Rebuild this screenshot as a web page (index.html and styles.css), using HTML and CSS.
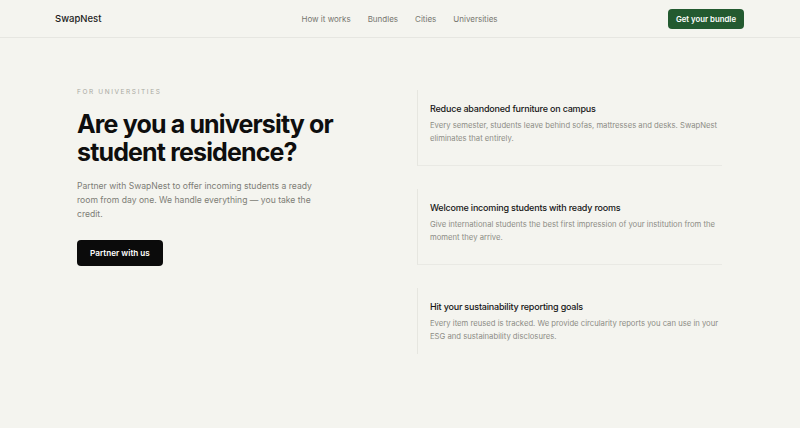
FILE: index.html
```html
<!doctype html>
<html lang="en">

<head>
  <meta charset="UTF-8" />
  <meta name="viewport" content="width=device-width, initial-scale=1.0" />
  <title>SwapNest for Universities</title>
  <link rel="stylesheet" href="styles.css">
</head>

<body>
  <header class="nav">
    <a class="logo" href="#">SwapNest</a>
    <nav class="nav-links">
      <a href="#">How it works</a>
      <a href="#">Bundles</a>
      <a href="#">Cities</a>
      <a href="#">Universities</a>
    </nav>
    <div class="nav-cta">
      <a class="btn btn-green" href="#">Get your bundle</a>
    </div>
  </header>

  <main class="hero">
    <div class="hero-copy">
      <p class="eyebrow">For universities</p>
      <h1>Are you a university or student residence?</h1>
      <p class="lead">Partner with SwapNest to offer incoming students a ready room from day one. We handle everything — you take the credit.</p>
      <a class="btn btn-dark" href="#">Partner with us</a>
    </div>

    <!-- Benefits list -->
    <div class="benefits">
      <div class="benefit">
        <h3>Reduce abandoned furniture on campus</h3>
        <p>Every semester, students leave behind sofas, mattresses and desks. SwapNest eliminates that entirely.</p>
      </div>
      <div class="benefit">
        <h3>Welcome incoming students with ready rooms</h3>
        <p>Give international students the best first impression of your institution from the moment they arrive.</p>
      </div>
      <div class="benefit">
        <h3>Hit your sustainability reporting goals</h3>
        <p>Every item reused is tracked. We provide circularity reports you can use in your ESG and sustainability disclosures.</p>
      </div>
    </div>
  </main>
</body>

</html>
```

FILE: styles.css
```css
* {
  margin: 0;
  padding: 0;
  box-sizing: border-box;
}

body {
  background: #f4f4ef;
  color: #141414;
  font-family: Inter, "Noto Sans", sans-serif;
  -webkit-font-smoothing: antialiased;
}

a {
  text-decoration: none;
  color: inherit;
}

/* Top bar */
.nav {
  display: grid;
  grid-template-columns: 1fr auto 1fr;
  align-items: center;
  height: 38px;
  padding: 0 56px 0 55px;
  border-bottom: 1px solid #e6e6e1;
}

.logo {
  font-size: 9.5px;
  font-weight: 500;
  color: #1c1c1c;
}

.nav-links {
  display: flex;
  gap: 17px;
}

.nav-links a {
  font-size: 8px;
  color: #77776f;
}

.nav-cta {
  display: flex;
  justify-content: flex-end;
}

.btn {
  display: inline-flex;
  align-items: center;
  justify-content: center;
  color: #fff;
  font-weight: 600;
  border-radius: 4px;
}

.btn-green {
  height: 20px;
  padding: 0 8px;
  font-size: 7.8px;
  background: #235a30;
}

.btn-dark {
  height: 26px;
  padding: 0 13px;
  font-size: 8.2px;
  background: #0b0b0b;
}

/* Hero */
.hero {
  display: grid;
  grid-template-columns: 305px 305px;
  column-gap: 35px;
  align-items: start;
  padding: 50px 77px;
}

.eyebrow {
  font-size: 6.5px;
  line-height: 9px;
  letter-spacing: 1.6px;
  text-transform: uppercase;
  color: #a9a9a2;
}

.hero-copy h1 {
  margin-top: 13px;
  font-size: 25px;
  line-height: 28px;
  font-weight: 700;
  letter-spacing: -0.85px;
  color: #0e0e0e;
}

.lead {
  margin-top: 13px;
  max-width: 245px;
  font-size: 8.6px;
  line-height: 14px;
  color: #7d7d76;
}

.hero-copy .btn-dark {
  margin-top: 19px;
}

/* Benefits */
.benefits {
  display: flex;
  flex-direction: column;
  gap: 23px;
  margin-top: 2px;
}

.benefit {
  padding: 12px 0 11px 12px;
  border-left: 1px solid #e6e6e0;
}

.benefit:not(:last-child) {
  padding-bottom: 20px;
  border-bottom: 1px solid #e9e9e4;
}

.benefit h3 {
  font-size: 9px;
  line-height: 13px;
  font-weight: 500;
  letter-spacing: -0.2px;
  color: #161616;
}

.benefit p {
  margin-top: 4px;
  font-size: 7.7px;
  line-height: 13px;
  color: #8d8d86;
}
```
